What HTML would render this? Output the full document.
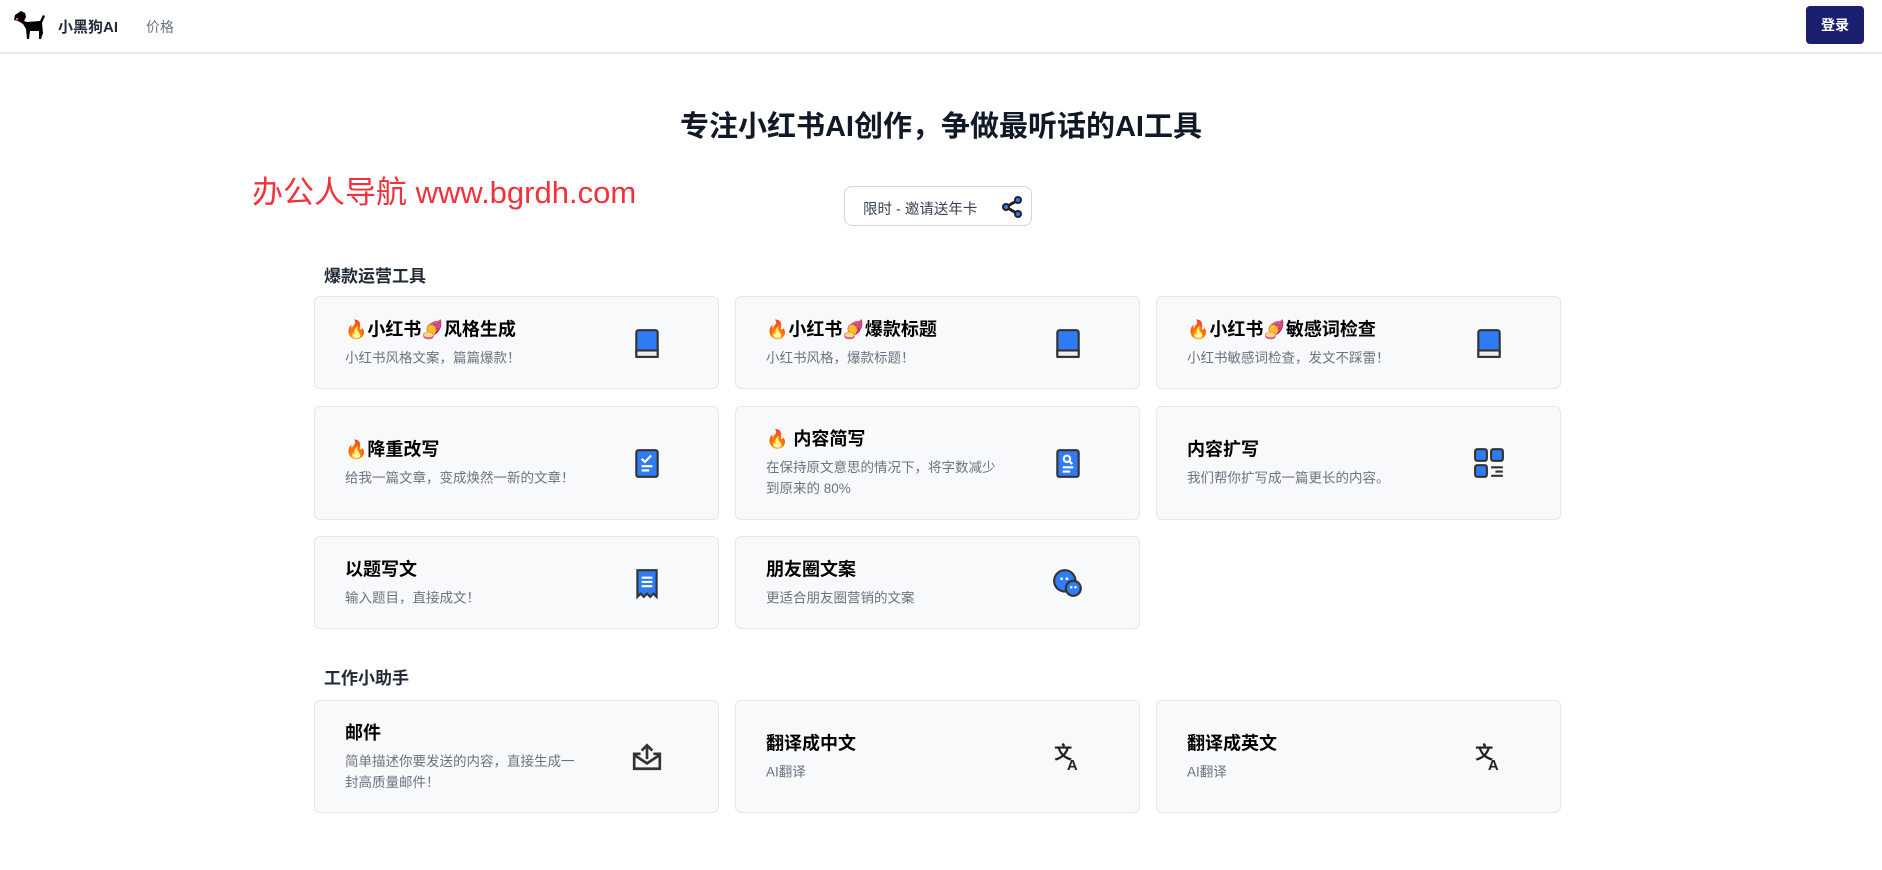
<!DOCTYPE html>
<html><head><meta charset="utf-8"><style>
*{margin:0;padding:0;box-sizing:border-box}
body{width:1882px;height:870px;background:#fff;font-family:"Liberation Sans","Noto Sans CJK SC",sans-serif;position:relative;overflow:hidden;color:#111}
.nav{position:absolute;left:0;top:0;width:1882px;height:54px;border-bottom:2px solid #e5e7eb}
.brand{position:absolute;left:58px;top:16px;font-size:15px;font-weight:bold;color:#1f2937}
.price{position:absolute;left:146px;top:17px;font-size:14px;color:#6b7280}
.login{position:absolute;left:1806px;top:6px;width:58px;height:38px;background:#1a1f6e;border-radius:4px;color:#fff;font-size:14px;font-weight:bold;text-align:center;line-height:38px}
h1{position:absolute;left:0;width:1882px;top:103px;text-align:center;font-size:29px;font-weight:bold;color:#111827}
.wm{position:absolute;left:252px;top:167px;font-size:31px;color:#f0323c}
.share{position:absolute;left:844px;top:186px;width:188px;height:40px;border:1px solid #d1d5db;border-radius:8px;font-size:14.5px;color:#374151}
.share span{position:absolute;left:18px;top:11px}
.share svg{position:absolute;left:154px;top:7px}
.sec{position:absolute;left:324px;font-size:17px;font-weight:bold;color:#1f2937}
.card{position:absolute;width:405px;background:#f8f9fb;border:1px solid #e5e7eb;border-radius:6px}
.in{position:absolute;left:30px;top:50%;transform:translateY(-50%);width:242px}
.t{font-size:18px;font-weight:bold;color:#000;line-height:24px}
.d{font-size:13.5px;color:#6b7280;line-height:21px;margin-top:6px}
.ic{position:absolute;left:316px;top:50%;transform:translateY(-50%);width:32px;height:34px}
</style></head><body>
<div class="nav">
<svg style="position:absolute;left:12px;top:9px" width="36" height="32" viewBox="0 0 36 32"><path d="M3 6 L9 2 L13 4 L14 8 L12 12 L15 13 L28 12 L31 6 L33 7 L30 14 L31 24 L29 30 L27 30 L27 22 L18 22 L17 30 L15 30 L14 20 L11 15 L6 12 L2 11 Z" fill="#000"/><circle cx="5" cy="10" r="1.2" fill="#e66"/></svg>
<div class="brand">小黑狗AI</div><div class="price">价格</div>
<div class="login">登录</div></div>
<h1>专注小红书AI创作，争做最听话的AI工具</h1>
<div class="wm">办公人导航 www.bgrdh.com</div>
<div class="share"><span>限时 - 邀请送年卡</span><svg width="26" height="26" viewBox="0 0 26 26"><path d="M19 6 L7 13 L19 20" stroke="#222" stroke-width="3" fill="none"/><circle cx="19" cy="6" r="4" fill="#222"/><circle cx="7" cy="13" r="4" fill="#222"/><circle cx="19" cy="20" r="4" fill="#222"/><circle cx="19" cy="6" r="2" fill="#2f7cf6"/><circle cx="7" cy="13" r="2" fill="#2f7cf6"/><circle cx="19" cy="20" r="2" fill="#2f7cf6"/></svg></div>

<div class="sec" style="top:262px">爆款运营工具</div>
<div class="sec" style="top:664px">工作小助手</div>

<svg width="0" height="0" style="position:absolute"><defs>
<g id="book"><rect x="5" y="3" width="20" height="25" rx="2" fill="#2f7cf6" stroke="#333" stroke-width="2"/><rect x="5" y="22" width="20" height="6" fill="#eee" stroke="#333" stroke-width="2"/></g>
<g id="tr"><text x="2" y="17" font-size="17" font-weight="bold" fill="#222" font-family="Noto Sans CJK SC">文</text><text x="14" y="27" font-size="14" font-weight="bold" fill="#222" font-family="Liberation Sans">A</text></g>
</defs></svg>

<div class="card" style="left:314px;top:296px;height:93px"><div class="in"><div class="t">🔥小红书🍠风格生成</div><div class="d">小红书风格文案，篇篇爆款！</div></div><svg class="ic" viewBox="0 0 30 30"><use href="#book"/></svg></div>
<div class="card" style="left:735px;top:296px;height:93px"><div class="in"><div class="t">🔥小红书🍠爆款标题</div><div class="d">小红书风格，爆款标题！</div></div><svg class="ic" viewBox="0 0 30 30"><use href="#book"/></svg></div>
<div class="card" style="left:1156px;top:296px;height:93px"><div class="in"><div class="t">🔥小红书🍠敏感词检查</div><div class="d">小红书敏感词检查，发文不踩雷！</div></div><svg class="ic" viewBox="0 0 30 30"><use href="#book"/></svg></div>

<div class="card" style="left:314px;top:406px;height:114px"><div class="in"><div class="t">🔥降重改写</div><div class="d">给我一篇文章，变成焕然一新的文章！</div></div><svg class="ic" viewBox="0 0 30 30"><rect x="5" y="3" width="20" height="25" rx="2" fill="#2f7cf6" stroke="#333" stroke-width="2"/><path d="M10 11 L13 14 L19 8" stroke="#fff" stroke-width="2" fill="none"/><path d="M10 18 H20 M10 22 H17" stroke="#fff" stroke-width="2"/></svg></div>
<div class="card" style="left:735px;top:406px;height:114px"><div class="in"><div class="t">🔥 内容简写</div><div class="d">在保持原文意思的情况下，将字数减少到原来的 80%</div></div><svg class="ic" viewBox="0 0 30 30"><rect x="5" y="3" width="20" height="25" rx="2" fill="#2f7cf6" stroke="#333" stroke-width="2"/><circle cx="14" cy="11" r="3" stroke="#fff" stroke-width="2" fill="none"/><path d="M16 13 L19 16 M10 19 H20 M10 23 H17" stroke="#fff" stroke-width="2"/></svg></div>
<div class="card" style="left:1156px;top:406px;height:114px"><div class="in"><div class="t">内容扩写</div><div class="d">我们帮你扩写成一篇更长的内容。</div></div><svg class="ic" viewBox="0 0 30 30"><rect x="2" y="2" width="11" height="11" rx="2" fill="#2f7cf6" stroke="#333" stroke-width="2"/><rect x="17" y="2" width="11" height="11" rx="2" fill="#2f7cf6" stroke="#333" stroke-width="2"/><rect x="2" y="17" width="11" height="11" rx="2" fill="#2f7cf6" stroke="#333" stroke-width="2"/><path d="M17 19 H28 M21 23 H28 M17 27 H28" stroke="#333" stroke-width="2"/></svg></div>

<div class="card" style="left:314px;top:536px;height:93px"><div class="in"><div class="t">以题写文</div><div class="d">输入题目，直接成文！</div></div><svg class="ic" viewBox="0 0 30 30"><path d="M6 3 H24 V28 L21 25 L18 28 L15 25 L12 28 L9 25 L6 28 Z" fill="#2f7cf6" stroke="#333" stroke-width="2"/><path d="M10 10 H20 M10 14 H20 M10 18 H20" stroke="#fff" stroke-width="2"/></svg></div>
<div class="card" style="left:735px;top:536px;height:93px"><div class="in"><div class="t">朋友圈文案</div><div class="d">更适合朋友圈营销的文案</div></div><svg class="ic" viewBox="0 0 30 30"><circle cx="12" cy="13" r="10" fill="#2f7cf6" stroke="#333" stroke-width="2"/><circle cx="20" cy="20" r="7" fill="#2f7cf6" stroke="#333" stroke-width="2"/><circle cx="9" cy="11" r="1.3" fill="#fff"/><circle cx="14" cy="11" r="1.3" fill="#fff"/><circle cx="18" cy="19" r="1.2" fill="#fff"/><circle cx="22" cy="19" r="1.2" fill="#fff"/></svg></div>

<div class="card" style="left:314px;top:700px;height:113px"><div class="in"><div class="t">邮件</div><div class="d">简单描述你要发送的内容，直接生成一封高质量邮件！</div></div><svg class="ic" viewBox="0 0 30 30"><path d="M9 12 H3 V26 H27 V12 H21" stroke="#333" stroke-width="2.5" fill="none"/><path d="M3 13 L15 21 L27 13" stroke="#333" stroke-width="2.5" fill="none"/><path d="M15 17 V5 M10 9 L15 4 L20 9" stroke="#333" stroke-width="2.5" fill="none"/></svg></div>
<div class="card" style="left:735px;top:700px;height:113px"><div class="in"><div class="t">翻译成中文</div><div class="d">AI翻译</div></div><svg class="ic" viewBox="0 0 30 30"><use href="#tr"/></svg></div>
<div class="card" style="left:1156px;top:700px;height:113px"><div class="in"><div class="t">翻译成英文</div><div class="d">AI翻译</div></div><svg class="ic" viewBox="0 0 30 30"><use href="#tr"/></svg></div>
</body></html>
